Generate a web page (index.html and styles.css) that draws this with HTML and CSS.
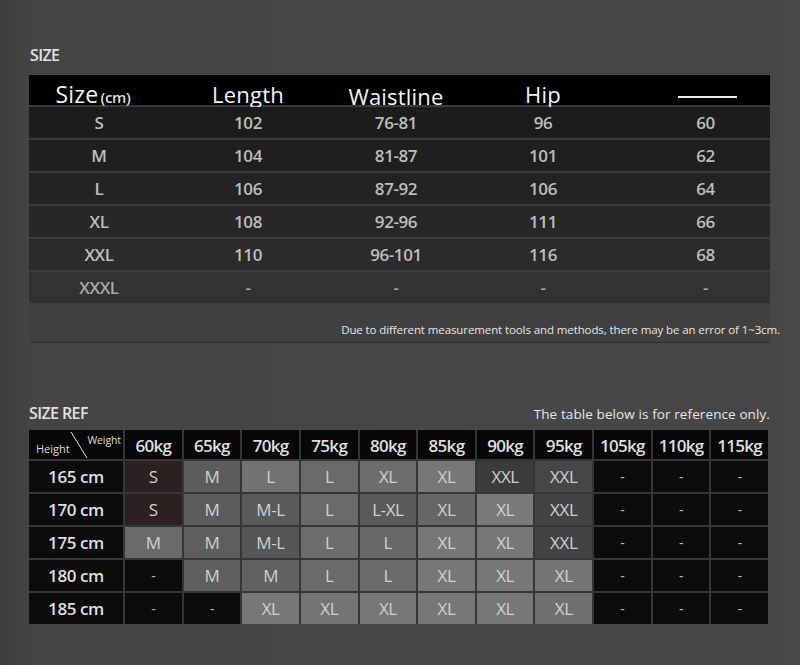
FILE: index.html
```html
<!DOCTYPE html>
<html>
<head>
<meta charset="utf-8">
<link rel="stylesheet" href="styles.css">
</head>
<body>
<div class="page">
  <h2 class="title t1">SIZE</h2>
  <div class="size-table">
    <div class="row head">
      <div class="c c1"><span class="big">Size</span><span class="unit">(cm)</span></div>
      <div class="c">Length</div>
      <div class="c c3">Waistline</div>
      <div class="c c4">Hip</div>
      <div class="c c5"><span class="dash-line"></span></div>
    </div>
    <div class="row r1"><div class="c">S</div><div class="c">102</div><div class="c">76-81</div><div class="c">96</div><div class="c c5">60</div></div>
    <div class="row r2"><div class="c">M</div><div class="c">104</div><div class="c">81-87</div><div class="c">101</div><div class="c c5">62</div></div>
    <div class="row r3"><div class="c">L</div><div class="c">106</div><div class="c">87-92</div><div class="c">106</div><div class="c c5">64</div></div>
    <div class="row r4"><div class="c">XL</div><div class="c">108</div><div class="c">92-96</div><div class="c">111</div><div class="c c5">66</div></div>
    <div class="row r5"><div class="c">XXL</div><div class="c">110</div><div class="c">96-101</div><div class="c">116</div><div class="c c5">68</div></div>
    <div class="row r6"><div class="c">XXXL</div><div class="c">-</div><div class="c">-</div><div class="c">-</div><div class="c c5">-</div></div>
  </div>
  <div class="note"><span class="note-text">Due to different measurement tools and methods, there may be an error of 1~3cm.</span></div>

  <div class="ref-head">
    <h2 class="title">SIZE REF</h2>
    <div class="ref-note">The table below is for reference only.</div>
  </div>
  <div class="ref-grid">
    <div class="hc corner">
      <span class="h-lbl">Height</span><span class="w-lbl">Weight</span>
      <svg class="diag" width="20" height="28" viewBox="0 0 20 28"><line x1="2" y1="1" x2="18" y2="27" stroke="#ddd" stroke-width="1"/></svg>
    </div>
    <div class="hc">60kg</div><div class="hc">65kg</div><div class="hc">70kg</div><div class="hc">75kg</div><div class="hc">80kg</div><div class="hc">85kg</div><div class="hc">90kg</div><div class="hc">95kg</div><div class="hc">105kg</div><div class="hc">110kg</div><div class="hc">115kg</div>

    <div class="rh">165 cm</div>
    <div class="v br">S</div><div class="v g5c">M</div><div class="v g72">L</div><div class="v g6a">L</div><div class="v g6e">XL</div><div class="v g77">XL</div><div class="v g3c">XXL</div><div class="v g46">XXL</div><div class="v bk">-</div><div class="v bk">-</div><div class="v bk">-</div>

    <div class="rh">170 cm</div>
    <div class="v br">S</div><div class="v g5c">M</div><div class="v g5a">M-L</div><div class="v g6a">L</div><div class="v g5a">L-XL</div><div class="v g66">XL</div><div class="v g7a">XL</div><div class="v g44">XXL</div><div class="v bk">-</div><div class="v bk">-</div><div class="v bk">-</div>

    <div class="rh">175 cm</div>
    <div class="v g6a">M</div><div class="v g5e">M</div><div class="v g55">M-L</div><div class="v g6c">L</div><div class="v g68">L</div><div class="v g77">XL</div><div class="v g77">XL</div><div class="v g44">XXL</div><div class="v bk">-</div><div class="v bk">-</div><div class="v bk">-</div>

    <div class="rh">180 cm</div>
    <div class="v bk">-</div><div class="v g5e">M</div><div class="v g60">M</div><div class="v g6a">L</div><div class="v g6a">L</div><div class="v g77">XL</div><div class="v g77">XL</div><div class="v g74">XL</div><div class="v bk">-</div><div class="v bk">-</div><div class="v bk">-</div>

    <div class="rh">185 cm</div>
    <div class="v bk">-</div><div class="v bk">-</div><div class="v g77">XL</div><div class="v g74">XL</div><div class="v g77">XL</div><div class="v g77">XL</div><div class="v g77">XL</div><div class="v g70">XL</div><div class="v bk">-</div><div class="v bk">-</div><div class="v bk">-</div>
  </div>
</div>
</body>
</html>
```

FILE: styles.css
```css
* { box-sizing: border-box; }
html, body { margin: 0; padding: 0; }
body {
  width: 800px;
  height: 665px;
  overflow: hidden;
  background: linear-gradient(90deg, #3c3c3c 0px, #444 30px, #474747 400px, #464646 770px, #4a4a4a 800px);
  font-family: "Open Sans", "Noto Sans", sans-serif;
  color: #ddd;
}
.page {
  padding: 45px 30px 0 29px;
}
.title {
  margin: 0;
  font-size: 16px;
  font-weight: 600;
  letter-spacing: -0.6px;
  color: #e2e2e2;
  line-height: 20px;
}
.t1 { margin-left: 1px; height: 30px; }

.size-table {
  width: 741px;
  display: flex;
  flex-direction: column;
  gap: 2px;
  background: #3a3a3a;
}
.row {
  display: grid;
  grid-template-columns: 140px 158px 138px 156px 149px;
  height: 31px;
  align-items: center;
  font-size: 17px;
  font-weight: 600;
  letter-spacing: -0.4px;
  color: #bdbdbd;
}
.row .c { text-align: center; }
.row .c5 { padding-left: 20px; }
.row.head {
  height: 30px;
  background: #000;
  color: #f4f4f4;
  font-size: 22px;
  font-weight: 400;
  letter-spacing: 0.2px;
}
.row.head .c { padding-top: 2px; }
.row.head .c1 { padding-right: 12px; }
.row.head .c3 { padding-top: 6px; }
.big { font-size: 23px; }
.unit { font-size: 15px; font-weight: 600; color: #ddd; margin-left: 2px; letter-spacing: -0.3px; }
.dash-line {
  display: inline-block;
  width: 59px;
  height: 2px;
  background: #eee;
  vertical-align: middle;
  margin-left: 3px;
}
.r1 { background: #1c1c1c; }
.r2 { background: #1f1f1f; }
.r3 { background: #232323; }
.r4 { background: #272727; }
.r5 { background: #2b2b2b; }
.r6 { background: #313131; color: #a8a8a8; }

.note {
  width: 741px;
  height: 40px;
  border-bottom: 1px solid #2e2e2e;
  background: #404040;
  text-align: right;
  padding-top: 20px;
  line-height: 16px;
}
.note-text {
  font-size: 11.5px;
  letter-spacing: -0.1px;
  color: #e6e6e6;
  margin-right: -10px;
  position: relative;
  top: -3px;
}

.ref-head {
  margin-top: 56px;
  width: 741px;
  display: flex;
  justify-content: space-between;
  align-items: flex-end;
  height: 24px;
  margin-bottom: 7px;
}
.ref-note {
  font-size: 13.5px;
  color: #e6e6e6;
  letter-spacing: 0.1px;
  line-height: 18px;
  padding-bottom: 0px;
}

.ref-grid {
  display: grid;
  width: 739px;
  grid-template-columns: 94px repeat(11, 1fr);
  grid-template-rows: 29px repeat(5, 31px);
  column-gap: 2px;
  row-gap: 2px;
  background: #363636;
}
.ref-grid > div {
  display: flex;
  align-items: center;
  justify-content: center;
}
.hc {
  background: #080808;
  color: #dedede;
  font-size: 17px;
  font-weight: 600;
  letter-spacing: -0.7px;
  padding-top: 2px;
}
.hc.corner {
  position: relative;
  font-weight: 400;
}
.h-lbl {
  position: absolute;
  left: 7px;
  bottom: 3px;
  font-size: 11px;
  letter-spacing: 0;
}
.w-lbl {
  position: absolute;
  right: 2px;
  top: 3px;
  font-size: 10.5px;
  letter-spacing: -0.1px;
}
.diag {
  position: absolute;
  left: 40px;
  top: 1px;
}
.rh {
  background: #0c0c0c;
  font-size: 17px;
  font-weight: 600;
  letter-spacing: -0.4px;
  color: #dedede;
}
.v {
  font-size: 17px;
  font-weight: 500;
  letter-spacing: -0.4px;
  color: #d0d0d0;
}
.v.bk { background: #0c0c0c; font-size: 14px; color: #bbb; }
.br { background: #2b2121; }
.g3c { background: #3c3b3b; }
.g44 { background: #444242; }
.g46 { background: #474545; }
.g55 { background: #565656; }
.g5a { background: #5a5a5a; }
.g5c { background: #5c5c5c; }
.g5e { background: #5e5e5e; }
.g60 { background: #616161; }
.g66 { background: #666; }
.g68 { background: #686868; }
.g6a { background: #6a6a6a; }
.g6c { background: #6c6c6c; }
.g6e { background: #6e6e6e; }
.g70 { background: #707070; }
.g72 { background: #727272; }
.g74 { background: #747474; }
.g77 { background: #777; }
.g7a { background: #7a7a7a; }
```
